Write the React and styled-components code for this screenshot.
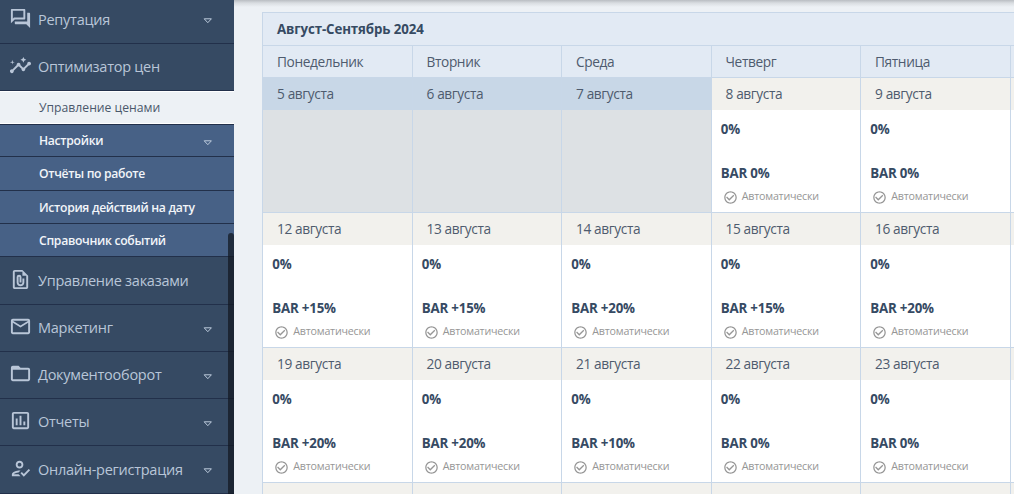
import React from 'react';
import styled, { createGlobalStyle } from 'styled-components';
import {
  MdOutlineQuestionAnswer,
  MdInsights,
  MdOutlineFilePresent,
  MdMailOutline,
  MdFolderOpen,
  MdOutlineAssessment,
  MdOutlineHowToReg,
  MdCheckCircleOutline,
} from 'react-icons/md';

const GlobalStyle = createGlobalStyle`
  * { box-sizing: border-box; }
  body {
    margin: 0;
    overflow: hidden;
    background: #edf1f5;
    font-family: "Open Sans", "Noto Sans", sans-serif;
  }
`;

const Page = styled.div`
  display: flex;
  width: 1014px;
  height: 494px;
  overflow: hidden;
`;

const Sidebar = styled.nav`
  position: relative;
  flex: 0 0 234px;
  background: #364a63;
`;

const MenuItem = styled.div`
  display: flex;
  align-items: center;
  height: ${(p) => p.$h}px;
  padding: 0 20px 1px 9px;
  border-bottom: 1px solid #22304a;
  color: #b9c6d8;
  font-size: 14.5px;
  letter-spacing: -0.26px;

  &:first-child {
    margin-top: -4px;
  }

  svg.icon {
    flex: none;
    width: 23px;
    height: 23px;
    margin: -2px 6px 0 0;
  }
`;

const SubItem = styled(MenuItem)`
  padding-left: 39px;
  padding-bottom: 0;
  font-size: 12.2px;
  letter-spacing: ${(p) => (p.$active ? 0 : -0.31)}px;
  font-weight: ${(p) => (p.$active ? 400 : 600)};
  color: ${(p) => (p.$active ? '#4b586b' : '#f2f5f9')};
  background: ${(p) => (p.$active ? '#edf1f5' : '#476186')};
  ${(p) => p.$active && 'padding-bottom: 1px; box-shadow: inset 0 1px #fff, inset 0 -1px #fff;'}
`;

const Label = styled.span`
  flex: 1;
  white-space: nowrap;
`;

const Arrow = styled.svg`
  flex: none;
  width: 12px;
  height: 6px;
  margin-top: 4px;
`;

const ScrollThumb = styled.div`
  position: absolute;
  top: 233px;
  right: 0;
  bottom: 0;
  width: 6px;
  border-radius: 3px 3px 0 0;
  background: rgba(18, 23, 33, 0.72);
`;

const Content = styled.main`
  flex: 1;
  min-width: 0;
  padding: 12px 0 0 28px;
  overflow: hidden;
  background: linear-gradient(#b9bdc2, #d9dde1 3px, #edf1f5 7px);
`;

const Calendar = styled.section`
  width: 898px;
  border: 1px solid #c8d7e8;
  background: #fff;
`;

const Title = styled.h1`
  height: 33px;
  margin: 0;
  padding-left: 14px;
  border-bottom: 1px solid #c8d7e8;
  background: #e2eaf4;
  color: #364a63;
  font-size: 13.3px;
  font-weight: 700;
  letter-spacing: -0.12px;
  line-height: 32px;
`;

const Week = styled.div`
  display: grid;
  grid-template-columns: repeat(6, 149.5px);
  height: ${(p) => p.$h}px;
  border-bottom: 1px solid #c8d7e8;
`;

const Weekday = styled.div`
  padding-left: 14px;
  border-right: 1px solid #c8d7e8;
  background: #e2eaf4;
  color: #4e5b6e;
  font-size: 13.7px;
  letter-spacing: -0.38px;
  line-height: 31px;
`;

const Day = styled.div`
  border-right: 1px solid #c8d7e8;
  background: ${(p) => (p.$past ? '#dde1e4' : '#fff')};
`;

const DayDate = styled.div`
  height: 32px;
  padding-left: 14px;
  background: ${(p) => (p.$past ? '#c8d7e7' : '#f2f1ed')};
  color: #4e5b6e;
  font-size: 13.7px;
  letter-spacing: -0.38px;
  line-height: 32px;
`;

const DayBody = styled.div`
  padding: 10px 0 0 9.3px;
  color: #364a63;
  font-size: 13.3px;
  font-weight: 700;
  letter-spacing: -0.2px;
  line-height: 18px;
`;

const Rate = styled.div`
  margin-top: 26px;
`;

const Mode = styled.div`
  display: flex;
  align-items: center;
  gap: 4px;
  margin-top: 5px;
  padding-left: 2px;
  color: #969696;
  font-size: 10.7px;
  font-weight: 400;
  letter-spacing: -0.22px;

  svg {
    width: 15px;
    height: 15px;
    margin-top: 2px;
  }
`;

const menu = [
  { label: 'Репутация', icon: MdOutlineQuestionAnswer, h: 48, arrow: true },
  { label: 'Оптимизатор цен', icon: MdInsights, h: 47 },
  { label: 'Управление ценами', sub: true, active: true, h: 34 },
  { label: 'Настройки', sub: true, h: 32, arrow: true },
  { label: 'Отчёты по работе', sub: true, h: 34 },
  { label: 'История действий на дату', sub: true, h: 33 },
  { label: 'Справочник событий', sub: true, h: 33 },
  { label: 'Управление заказами', icon: MdOutlineFilePresent, h: 48 },
  { label: 'Маркетинг', icon: MdMailOutline, h: 47, arrow: true },
  { label: 'Документооборот', icon: MdFolderOpen, h: 47, arrow: true },
  { label: 'Отчеты', icon: MdOutlineAssessment, h: 47, arrow: true },
  { label: 'Онлайн-регистрация', icon: MdOutlineHowToReg, h: 48, arrow: true },
];

const weekdays = ['Понедельник', 'Вторник', 'Среда', 'Четверг', 'Пятница', ''];

const weeks = [
  { first: 5, rates: [null, null, null, '0%', '0%'] },
  { first: 12, rates: ['+15%', '+15%', '+20%', '+15%', '+20%'] },
  { first: 19, rates: ['+20%', '+20%', '+10%', '0%', '0%'] },
];

function DayCell({ date, rate }) {
  const past = rate === null;
  return (
    <Day $past={past}>
      <DayDate $past={past}>{date} августа</DayDate>
      {!past && (
        <DayBody>
          <div>0%</div>
          <Rate>BAR {rate}</Rate>
          <Mode>
            <MdCheckCircleOutline />
            Автоматически
          </Mode>
        </DayBody>
      )}
    </Day>
  );
}

export default function App() {
  return (
    <Page>
      <GlobalStyle />
      <Sidebar>
        {menu.map(({ label, icon: Icon, h, arrow, sub, active }) => {
          const Item = sub ? SubItem : MenuItem;
          return (
            <Item key={label} $h={h} $active={active}>
              {Icon && <Icon className="icon" />}
              <Label>{label}</Label>
              {arrow && (
                <Arrow viewBox="0 0 12 6">
                  <path d="M2.2.8h7.2L5.8 4.7z" fill="none" stroke="#bccadc" strokeWidth="1" />
                </Arrow>
              )}
            </Item>
          );
        })}
        <ScrollThumb />
      </Sidebar>
      <Content>
        <Calendar>
          <Title>Август-Сентябрь 2024</Title>
          <Week $h={32}>
            {weekdays.map((name) => (
              <Weekday key={name}>{name}</Weekday>
            ))}
          </Week>
          {weeks.map((week) => (
            <Week key={week.first} $h={135}>
              {week.rates.map((rate, i) => (
                <DayCell key={i} date={week.first + i} rate={rate} />
              ))}
              <Day>
                <DayDate />
              </Day>
            </Week>
          ))}
          <Week $h={135}>
            {weekdays.map((name) => (
              <Day key={name}>
                <DayDate />
              </Day>
            ))}
          </Week>
        </Calendar>
      </Content>
    </Page>
  );
}
